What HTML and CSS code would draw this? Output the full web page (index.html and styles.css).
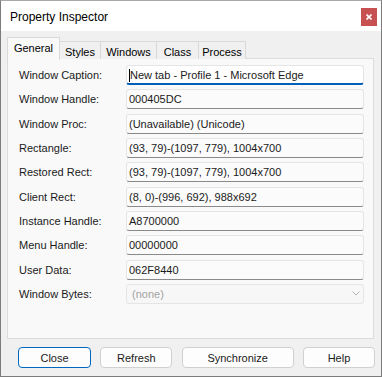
FILE: index.html
```html
<!DOCTYPE html>
<html>
<head>
<meta charset="utf-8">
<link rel="stylesheet" href="styles.css">
</head>
<body>
<div class="window">
  <div class="titlebar">
    <span class="title">Property Inspector</span>
    <span class="close-x"><svg width="6" height="6" viewBox="0 0 6 6"><path d="M0.5 0.5L5.5 5.5M5.5 0.5L0.5 5.5" stroke="#fff" stroke-width="1.6"/></svg></span>
  </div>
  <div class="client">
    <div class="tabs">
      <div class="tab sel">General</div>
      <div class="tab">Styles</div>
      <div class="tab">Windows</div>
      <div class="tab">Class</div>
      <div class="tab">Process</div>
    </div>
    <div class="panel">
      <div class="row"><span class="lbl">Window Caption:</span><span class="field focus"><span class="caret"></span>New tab - Profile 1 - Microsoft Edge</span></div>
      <div class="row"><span class="lbl">Window Handle:</span><span class="field">000405DC</span></div>
      <div class="row"><span class="lbl">Window Proc:</span><span class="field">(Unavailable) (Unicode)</span></div>
      <div class="row"><span class="lbl">Rectangle:</span><span class="field">(93, 79)-(1097, 779), 1004x700</span></div>
      <div class="row"><span class="lbl">Restored Rect:</span><span class="field">(93, 79)-(1097, 779), 1004x700</span></div>
      <div class="row"><span class="lbl">Client Rect:</span><span class="field">(8, 0)-(996, 692), 988x692</span></div>
      <div class="row"><span class="lbl">Instance Handle:</span><span class="field">A8700000</span></div>
      <div class="row"><span class="lbl">Menu Handle:</span><span class="field">00000000</span></div>
      <div class="row"><span class="lbl">User Data:</span><span class="field">062F8440</span></div>
      <div class="row"><span class="lbl">Window Bytes:</span><span class="field combo"><span>(none)</span><svg width="8" height="5" viewBox="0 0 8 5"><path d="M0.5 0.5L4 4L7.5 0.5" fill="none" stroke="#b4b4b4" stroke-width="1"/></svg></span></div>
    </div>
    <div class="buttons">
      <div class="btn default w72">Close</div>
      <div class="btn w72">Refresh</div>
      <div class="btn w112">Synchronize</div>
      <div class="btn w72">Help</div>
    </div>
  </div>
</div>
</body>
</html>
```
FILE: styles.css
```css
html, body {
  margin: 0;
  padding: 0;
}
body {
  font-family: "Liberation Sans", Arial, sans-serif;
  font-size: 11px;
  color: #1a1a1a;
  background: #ffffff;
}
.window {
  width: 382px;
  height: 377px;
  box-sizing: border-box;
  border: 1px solid #7c7c7c;
  border-top-color: #a8a8a8;
  display: flex;
  flex-direction: column;
  background: #f0f0f0;
}
.titlebar {
  height: 30px;
  background: #ffffff;
  display: flex;
  justify-content: space-between;
  align-items: flex-start;
  padding: 7px 4px 0 9px;
  box-sizing: border-box;
}
.title {
  font-size: 12px;
  line-height: 16px;
  margin-top: 1px;
  color: #000;
}
.close-x {
  width: 16px;
  height: 18px;
  background: #c75050;
  display: flex;
  align-items: center;
  justify-content: center;
}
.close-x svg { display: block; }
.client {
  flex: 1;
  display: flex;
  flex-direction: column;
  padding: 6px 7px 0 6px;
}
.tabs {
  display: flex;
  align-items: flex-end;
  height: 22px;
  margin-bottom: -1px;
  position: relative;
  z-index: 1;
}
.tab {
  height: 18px;
  box-sizing: border-box;
  border: 1px solid #d9d9d9;
  border-bottom: none;
  background: #f0f0f0;
  display: flex;
  align-items: center;
  justify-content: center;
  padding-top: 2px;
  margin-left: -1px;
  color: #000;
}
.tab.sel {
  height: 23px;
  background: #f9f9f9;
  margin-left: 0;
  padding-top: 0;
  padding-bottom: 3px;
  margin-bottom: -1px;
  position: relative;
  z-index: 2;
}
.tab:nth-child(1) { width: 53px; }
.tab:nth-child(2) { width: 42px; }
.tab:nth-child(3) { width: 57px; }
.tab:nth-child(4) { width: 43px; }
.tab:nth-child(5) { width: 48px; }
.panel {
  height: 281px;
  box-sizing: border-box;
  background: #f9f9f9;
  border: 1px solid #dcdcdc;
  padding: 6px 9px 0 11px;
  display: flex;
  flex-direction: column;
  gap: 4.33px;
}
.row {
  display: grid;
  grid-template-columns: 107px 1fr;
  align-items: center;
  height: 20px;
}
.lbl {
  color: #1a1a1a;
}
.field {
  height: 20px;
  box-sizing: border-box;
  border: 1px solid #e5e5e5;
  border-bottom-color: #8a8a8a;
  border-radius: 3px;
  background: #fbfbfb;
  display: flex;
  align-items: center;
  padding-left: 2px;
  color: #1a1a1a;
  white-space: nowrap;
  overflow: hidden;
}
.field.focus {
  background: #ffffff;
  border-bottom: 2px solid #005fb8;
  padding-top: 1px;
}
.caret {
  display: inline-block;
  width: 1px;
  height: 13px;
  background: #000;
  margin-right: 0;
}
.field.combo {
  border-bottom-color: #e5e5e5;
  background: #f7f7f7;
  color: #a3a3a3;
  justify-content: space-between;
  padding-left: 5px;
  padding-right: 3px;
}
.field.combo svg { display: block; }
.buttons {
  display: flex;
  justify-content: space-between;
  padding: 8px 0 0 11px;
  margin-right: -1px;
}
.btn {
  height: 21px;
  box-sizing: border-box;
  border: 1px solid #d0d0d0;
  border-radius: 4px;
  background: #fdfdfd;
  display: flex;
  align-items: center;
  justify-content: center;
  color: #1a1a1a;
}
.btn.default {
  border: 1px solid #0067c0;
  width: 73px;
}
.w72 { width: 72px; }
.w112 { width: 112px; }
.btn.default.w72 { width: 73px; }
```
